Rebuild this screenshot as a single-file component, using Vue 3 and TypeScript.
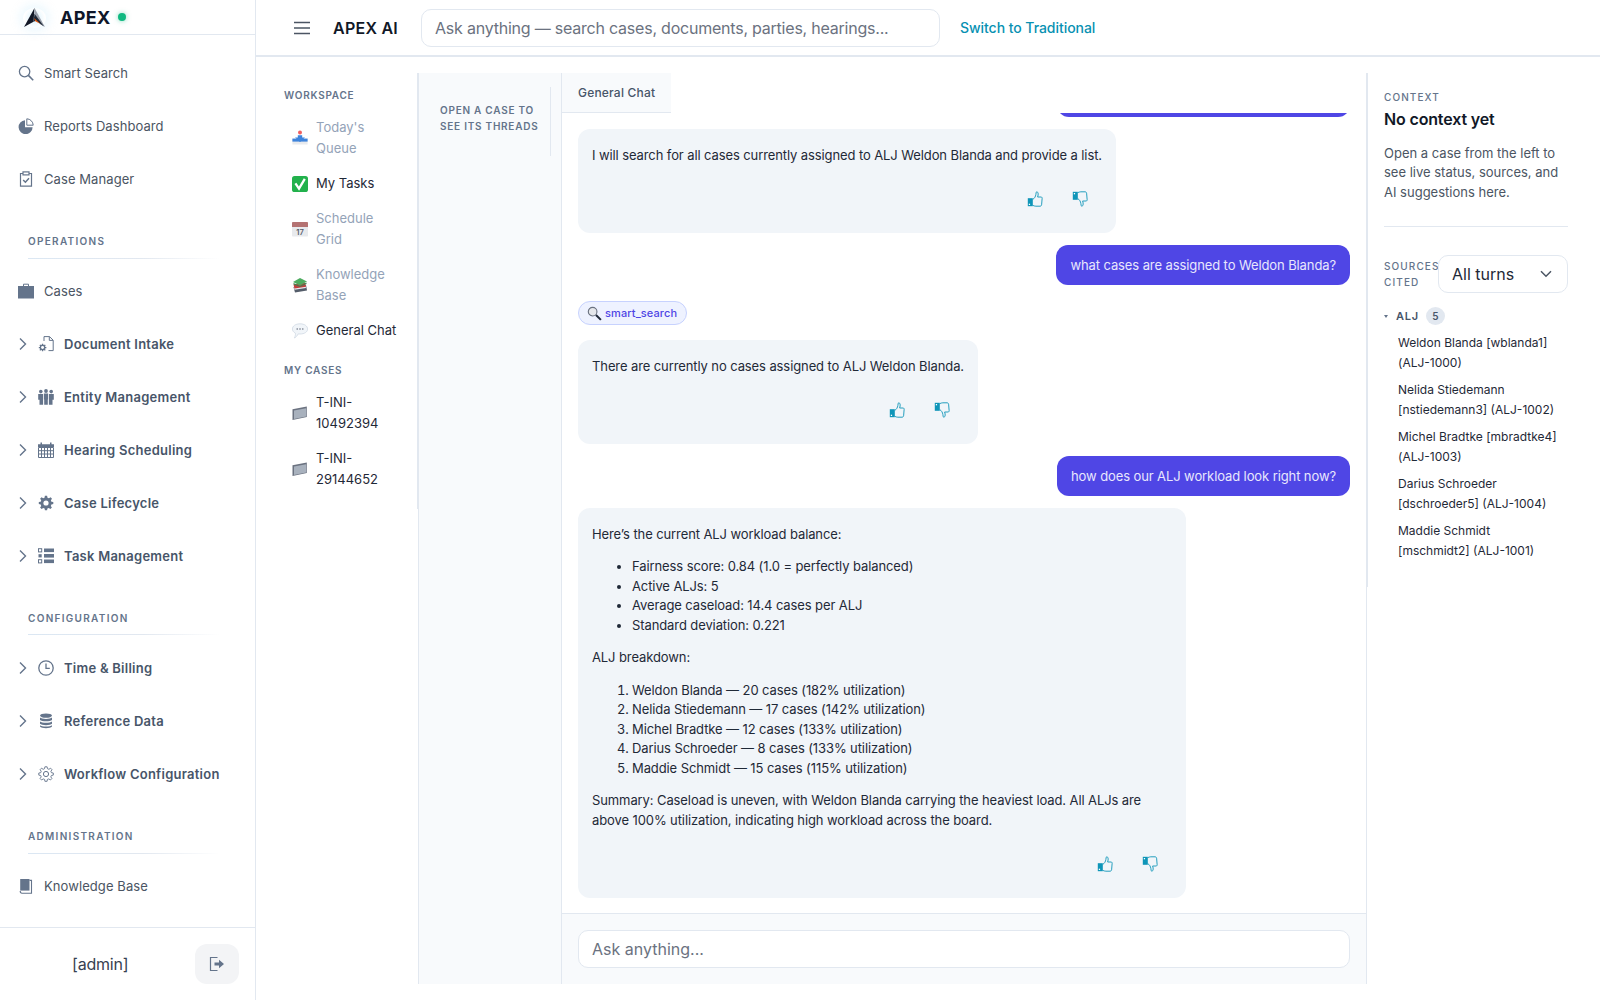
<template>
  <div class="app">
    <aside class="sidebar">
      <div class="brand">
        <span class="logo">
          <svg viewBox="0 0 24 21" width="23" height="20">
            <path d="M12 0 L1 20 L11 14.5 Z" fill="#111827" />
            <path d="M12 0 L23 20 L18 17 L12 7 Z" fill="#9ca3af" />
            <path d="M12 6 L22 19.5 L13.5 13.5 L11 14.5 Z" fill="#1f2937" />
            <path d="M11.5 10.5 L18 16.5 L12.8 14 Z" fill="#ea580c" />
          </svg>
        </span>
        <span class="brand-name">APEX</span>
        <span class="status-dot"></span>
      </div>

      <nav class="nav">
        <template v-for="(group, i) in navGroups" :key="i">
          <div v-if="group.title" :class="['nav-title', group.wide ? 'wide' : '']">{{ group.title }}</div>
          <div v-if="group.title" class="nav-rule"></div>
          <div
            v-for="item in group.items"
            :key="item.label"
            :class="['nav-item', item.expand ? 'expandable' : '']"
          >
            <svg v-if="item.expand" class="chev" viewBox="0 0 8 14" width="8" height="14">
              <path d="M1 1.5 L6.5 7 L1 12.5" fill="none" stroke="#64748b" stroke-width="1.4" />
            </svg>
            <svg class="nav-icon" viewBox="0 0 16 16" width="16" height="16" v-html="icons[item.icon]"></svg>
            <span>{{ item.label }}</span>
          </div>
        </template>
      </nav>

      <div class="side-foot">
        <span class="who">[admin]</span>
        <button class="logout" type="button">
          <svg viewBox="0 0 16 16" width="16" height="16">
            <path d="M8.5 1.5 H1.5 V14.5 H8.5" fill="none" stroke="#64748b" stroke-width="1.2" />
            <path d="M5.5 6.5 H10 V3.8 L15 8 L10 12.2 V9.5 H5.5 Z" fill="#64748b" />
          </svg>
        </button>
      </div>
    </aside>

    <main class="main">
      <header class="topbar">
        <svg class="burger" viewBox="0 0 16 14" width="16" height="14">
          <path d="M0 1.5 H16 M0 7 H16 M0 12.5 H16" stroke="#4b5563" stroke-width="1.7" />
        </svg>
        <span class="top-title">APEX AI</span>
        <input class="top-search" type="text" placeholder="Ask anything — search cases, documents, parties, hearings..." />
        <a class="top-link">Switch to Traditional</a>
      </header>

      <div class="panes">
        <section class="workspace">
          <div class="ws-title">WORKSPACE</div>
          <div v-for="w in workspaceItems" :key="w.label" :class="['ws-item', w.muted ? 'muted' : '']">
            <svg class="ws-icon" viewBox="0 0 16 16" width="16" height="16" v-html="emoji[w.icon]"></svg>
            <span>{{ w.label }}</span>
          </div>
          <div class="ws-title cases">MY CASES</div>
          <div v-for="c in myCases" :key="c" class="ws-item">
            <svg class="ws-icon" viewBox="0 0 16 16" width="16" height="16" v-html="emoji.folder"></svg>
            <span>{{ c }}</span>
          </div>
        </section>

        <section class="threads">
          <div class="thread-hint">OPEN A CASE TO SEE ITS THREADS</div>
        </section>

        <section class="chat">
          <div class="tabs">
            <div class="tab">General Chat</div>
          </div>

          <div class="messages">
            <!-- only the bottom edge of this one is still in view -->
            <div class="msg user scrolled-off"></div>

            <div class="msg bot">
              <p>I will search for all cases currently assigned to ALJ Weldon Blanda and provide a list.</p>
              <div class="feedback">
                <button type="button"><svg viewBox="0 0 16 16" width="16" height="16" v-html="thumb"></svg></button>
                <button type="button"><svg class="down" viewBox="0 0 16 16" width="16" height="16" v-html="thumb"></svg></button>
              </div>
            </div>

            <div class="msg user">what cases are assigned to Weldon Blanda?</div>

            <div class="tool-pill">
              <svg viewBox="0 0 16 16" width="15" height="15" v-html="emoji.magnifier"></svg>
              <span>smart_search</span>
            </div>

            <div class="msg bot">
              <p>There are currently no cases assigned to ALJ Weldon Blanda.</p>
              <div class="feedback">
                <button type="button"><svg viewBox="0 0 16 16" width="16" height="16" v-html="thumb"></svg></button>
                <button type="button"><svg class="down" viewBox="0 0 16 16" width="16" height="16" v-html="thumb"></svg></button>
              </div>
            </div>

            <div class="msg user">how does our ALJ workload look right now?</div>

            <div class="msg bot">
              <p>Here’s the current ALJ workload balance:</p>
              <ul>
                <li v-for="s in stats" :key="s">{{ s }}</li>
              </ul>
              <p>ALJ breakdown:</p>
              <ol>
                <li v-for="b in breakdown" :key="b">{{ b }}</li>
              </ol>
              <p>Summary: Caseload is uneven, with Weldon Blanda carrying the heaviest load. All ALJs are above 100% utilization, indicating high workload across the board.</p>
              <div class="feedback">
                <button type="button"><svg viewBox="0 0 16 16" width="16" height="16" v-html="thumb"></svg></button>
                <button type="button"><svg class="down" viewBox="0 0 16 16" width="16" height="16" v-html="thumb"></svg></button>
              </div>
            </div>
          </div>

          <div class="composer">
            <input type="text" placeholder="Ask anything..." />
          </div>
        </section>

        <section class="context">
          <div class="ctx-label">CONTEXT</div>
          <h2>No context yet</h2>
          <p class="ctx-text">Open a case from the left to see live status, sources, and AI suggestions here.</p>
          <div class="ctx-rule"></div>
          <div class="sources-head">
            <span class="sources-label">SOURCES CITED</span>
            <div class="turns">
              <span>All turns</span>
              <svg viewBox="0 0 12 8" width="12" height="8">
                <path d="M1 1.2 L6 6.2 L11 1.2" fill="none" stroke="#4b5563" stroke-width="1.5" />
              </svg>
            </div>
          </div>
          <div class="src-group">
            <span class="caret"></span>
            <span class="src-name">ALJ</span>
            <span class="src-count">5</span>
          </div>
          <div v-for="s in sources" :key="s" class="src-item">{{ s }}</div>
        </section>
      </div>
    </main>
  </div>
</template>

<script setup lang="ts">
interface NavItem {
  label: string;
  icon: string;
  expand?: boolean;
}

const navGroups: { title?: string; wide?: boolean; items: NavItem[] }[] = [
  {
    items: [
      { label: 'Smart Search', icon: 'search' },
      { label: 'Reports Dashboard', icon: 'pie' },
      { label: 'Case Manager', icon: 'clipboard' },
    ],
  },
  {
    title: 'OPERATIONS',
    wide: true,
    items: [
      { label: 'Cases', icon: 'briefcase' },
      { label: 'Document Intake', icon: 'docgear', expand: true },
      { label: 'Entity Management', icon: 'people', expand: true },
      { label: 'Hearing Scheduling', icon: 'calendar', expand: true },
      { label: 'Case Lifecycle', icon: 'gear', expand: true },
      { label: 'Task Management', icon: 'tasks', expand: true },
    ],
  },
  {
    title: 'CONFIGURATION',
    items: [
      { label: 'Time & Billing', icon: 'clock', expand: true },
      { label: 'Reference Data', icon: 'database', expand: true },
      { label: 'Workflow Configuration', icon: 'cog', expand: true },
    ],
  },
  {
    title: 'ADMINISTRATION',
    wide: true,
    items: [{ label: 'Knowledge Base', icon: 'book' }],
  },
];

const gearTeeth = 'M6.9 .8 H9.1 L9.5 2.7 L10.9 3.3 L12.6 2.2 L14 3.7 L12.9 5.3 L13.4 6.7 L15.3 7 V9.1 L13.4 9.5 L12.8 10.9 L13.9 12.5 L12.4 14 L10.8 12.9 L9.4 13.4 L9.1 15.3 H6.9 L6.6 13.4 L5.2 12.9 L3.6 14 L2.1 12.5 L3.2 10.9 L2.7 9.5 L.8 9.1 V7 L2.7 6.7 L3.2 5.3 L2.1 3.7 L3.5 2.2 L5.2 3.3 L6.5 2.7 Z';

const icons: Record<string, string> = {
  search: '<circle cx="6.6" cy="6.6" r="5.2" fill="none" stroke="#64748b" stroke-width="1.3"/><path d="M10.4 10.4 L15.2 15.2" stroke="#64748b" stroke-width="1.6"/>',
  pie: '<path d="M7 2.2 A7 7 0 1 0 14.6 9.2 H7 Z" fill="#64748b"/><path d="M8.8 .8 A6.6 6.6 0 0 1 15.2 7.2 H8.8 Z" fill="#fff" stroke="#64748b" stroke-width="1"/>',
  clipboard: '<path d="M5 2.5 H2.5 V15.2 H13.5 V2.5 H11" fill="none" stroke="#64748b" stroke-width="1.2"/><rect x="5" y=".9" width="6" height="3" fill="#fff" stroke="#64748b" stroke-width="1.2"/><path d="M5.2 9 L7.4 11.2 L11 7.2" fill="none" stroke="#64748b" stroke-width="1.5"/>',
  briefcase: '<path d="M5.5 3 V1.2 H10.5 V3" fill="none" stroke="#64748b" stroke-width="1"/><rect x="0" y="3" width="16" height="12.5" fill="#64748b"/>',
  docgear: `<path d="M6 5 V.6 H11.5 L15.2 4.2 V14.6 H10.5" fill="none" stroke="#64748b" stroke-width="1"/><path d="M11.3 .7 V4.4 H15" fill="none" stroke="#64748b" stroke-width="1"/><g transform="translate(.4 7.4) scale(.52)"><path d="${gearTeeth}" fill="#64748b"/><circle cx="8" cy="8" r="2.8" fill="#fff"/></g>`,
  people: '<circle cx="8" cy="2" r="1.9" fill="#64748b"/><circle cx="2.8" cy="2.6" r="1.8" fill="#64748b"/><circle cx="13.2" cy="2.6" r="1.8" fill="#64748b"/><path d="M5.9 4.6 H10.1 V10.5 H9.8 V15.8 H6.2 V10.5 H5.9 Z" fill="#64748b"/><path d="M.2 5 H5.1 V15.8 H1.5 V10.8 H.2 Z M10.9 5 H15.8 V10.8 H14.5 V15.8 H10.9 Z" fill="#64748b"/>',
  calendar: '<path d="M0 2.2 H2.5 V.4 H4 V2.2 H12 V.4 H13.5 V2.2 H16 V5 H0 Z" fill="#64748b"/><path d="M.5 5.5 H15.5 V15.5 H.5 Z" fill="none" stroke="#64748b" stroke-width="1"/><path d="M3.5 5.5 V15.5 M6.5 5.5 V15.5 M9.5 5.5 V15.5 M12.5 5.5 V15.5 M.5 8.7 H15.5 M.5 12 H15.5" stroke="#64748b" stroke-width="1"/>',
  gear: `<path d="${gearTeeth}" fill="#64748b"/><circle cx="8" cy="8" r="2.6" fill="#fff"/>`,
  tasks: '<rect x=".5" y=".7" width="3.2" height="3.2" fill="none" stroke="#64748b"/><rect x=".5" y="6.2" width="3.2" height="3.2" fill="#64748b"/><rect x=".5" y="11.7" width="3.2" height="3.2" fill="none" stroke="#64748b"/><rect x="6" y=".5" width="10" height="3.6" fill="#64748b"/><rect x="6" y="6" width="10" height="3.6" fill="#64748b"/><rect x="6" y="11.5" width="10" height="3.6" fill="#64748b"/>',
  clock: '<circle cx="8" cy="8" r="7.2" fill="none" stroke="#64748b" stroke-width="1.3"/><path d="M8 3.4 V8.4 H11.8" fill="none" stroke="#64748b" stroke-width="1.3"/>',
  database: '<ellipse cx="8" cy="2.6" rx="6" ry="2.2" fill="#64748b"/><path d="M2 4.6 C3.5 6.4 12.5 6.4 14 4.6 V7 C12.5 8.8 3.5 8.8 2 7 Z" fill="#64748b"/><path d="M2 8.4 C3.5 10.2 12.5 10.2 14 8.4 V10.8 C12.5 12.6 3.5 12.6 2 10.8 Z" fill="#64748b"/><path d="M2 12.2 C3.5 14 12.5 14 14 12.2 V13.6 C12.5 15.8 3.5 15.8 2 13.6 Z" fill="#64748b"/>',
  cog: `<path d="${gearTeeth}" fill="#fff" stroke="#64748b" stroke-width=".9"/><circle cx="8" cy="8" r="2.6" fill="none" stroke="#64748b" stroke-width="1"/>`,
  book: '<path d="M2.2 1 H11.5 V12.6 H2.2 Z" fill="#64748b"/><path d="M11.5 2.4 H13.5 V15.2 H4 C2.8 15.2 2.2 14.4 2.2 13" fill="none" stroke="#64748b" stroke-width="1.1"/>',
};

const emoji: Record<string, string> = {
  inbox: '<circle cx="8" cy="2.6" r="2" fill="#ef4444"/><path d="M.4 8.6 H4.5 L5.5 10.6 H10.5 L11.5 8.6 H15.6 V14.4 H.4 Z" fill="#e5e7eb"/><path d="M.4 8.6 H15.6 V11.6 H.4 Z" fill="#1d6fd6"/><path d="M5.8 5.2 H10.2 V7.5 H13 L8 12 L3 7.5 H5.8 Z" fill="#1d6fd6"/>',
  check: '<rect x="0" y="0" width="16" height="16" rx="2.6" fill="#22b14c"/><path d="M3.4 7.4 L7 12.6 L12.8 2.8" fill="none" stroke="#fff" stroke-width="2.3"/>',
  cal: '<rect x="0" y="1" width="16" height="14.5" rx=".8" fill="#e5e7eb"/><path d="M0 1.8 C0 1.3 .4 1 .8 1 H15.2 C15.6 1 16 1.3 16 1.8 V6 H0 Z" fill="#a85a5a"/><text x="8" y="13.6" text-anchor="middle" font-size="7.5" font-weight="600" fill="#374151" font-family="Inter, sans-serif">17</text>',
  books: '<path d="M1.5 10 L14 8 L15 13.5 L3 15.5 Z" fill="#374151"/><path d="M2 10.5 L13.5 8.8 L14 11 L2.5 12.8 Z" fill="#e5e7eb"/><path d="M1.5 7.5 L13 5.8 L14 9.8 L2.5 11.5 Z" fill="#b91c1c"/><path d="M1 5 L8 1 L15 4.5 L8 8.5 Z" fill="#2f9e44"/><path d="M1.5 6 L8 9 L14.5 5.5 V7 L8 10 L1.5 7.5 Z" fill="#1e6b32"/>',
  bubble: '<path d="M8 .8 C12.4 .8 15.6 3 15.6 6 C15.6 9 12.4 11 8 11 C7.4 11 6.8 11 6.2 10.9 C5.4 12.6 3.8 14.5 2.4 15 C3.2 13.6 3.6 11.8 3.4 10.2 C1.6 9.2 .4 7.8 .4 6 C.4 3 3.6 .8 8 .8 Z" fill="#f1f5f9" stroke="#cbd5e1" stroke-width=".7"/><circle cx="5.2" cy="6" r=".8" fill="#6b7280"/><circle cx="8" cy="6" r=".8" fill="#6b7280"/><circle cx="10.8" cy="6" r=".8" fill="#6b7280"/>',
  folder: '<path d="M.5 4.2 L14.8 1.6 V12 L.5 15 Z" fill="#6b7280"/><path d="M2 5.4 L14.2 3.2 V11.4 L2 14 Z" fill="#a8b1bd"/>',
  magnifier: '<circle cx="6" cy="6" r="4.6" fill="#e5e7eb" stroke="#6b7280" stroke-width="1.2"/><path d="M9.6 9.6 L14.8 14.8" stroke="#1f2937" stroke-width="2.2"/>',
};

const thumb = '<rect x=".8" y="7.2" width="5" height="8" fill="#0e95b8"/><rect x="1.8" y="12.7" width="1.3" height="1.3" fill="#fff"/><path d="M5.8 8.4 C7.4 7.4 8.6 5.6 8.9 3.4 L9.2 1.2 C9.8 .4 10.6 .9 11 1.9 C11.4 3.2 11 4.8 10.6 6 H14 C15 6 15.4 6.9 15.1 7.8 L14.6 13.8 C14.4 14.8 13.8 15.2 13 15.2 H8.8 C7.8 15.2 6.8 14.8 5.8 14.4" fill="none" stroke="#0e95b8" stroke-width=".9"/>';

const workspaceItems = [
  { label: "Today's Queue", icon: 'inbox', muted: true },
  { label: 'My Tasks', icon: 'check' },
  { label: 'Schedule Grid', icon: 'cal', muted: true },
  { label: 'Knowledge Base', icon: 'books', muted: true },
  { label: 'General Chat', icon: 'bubble' },
];

const myCases = ['T-INI-10492394', 'T-INI-29144652'];

const stats = [
  'Fairness score: 0.84 (1.0 = perfectly balanced)',
  'Active ALJs: 5',
  'Average caseload: 14.4 cases per ALJ',
  'Standard deviation: 0.221',
];

const breakdown = [
  'Weldon Blanda — 20 cases (182% utilization)',
  'Nelida Stiedemann — 17 cases (142% utilization)',
  'Michel Bradtke — 12 cases (133% utilization)',
  'Darius Schroeder — 8 cases (133% utilization)',
  'Maddie Schmidt — 15 cases (115% utilization)',
];

const sources = [
  'Weldon Blanda [wblanda1] (ALJ-1000)',
  'Nelida Stiedemann [nstiedemann3] (ALJ-1002)',
  'Michel Bradtke [mbradtke4] (ALJ-1003)',
  'Darius Schroeder [dschroeder5] (ALJ-1004)',
  'Maddie Schmidt [mschmidt2] (ALJ-1001)',
];
</script>

<style scoped>
.app {
  display: flex;
  height: 1000px;
  font-family: Inter, "Liberation Sans", sans-serif;
  font-size: 13px;
  color: #1f2937;
  background: #fff;
  overflow: hidden;
}

/* left navigation */
.sidebar {
  width: 256px;
  flex: none;
  display: flex;
  flex-direction: column;
  box-sizing: border-box;
  border-right: 1px solid #e2e8f0;
}

.brand {
  height: 35px;
  flex: none;
  box-sizing: border-box;
  display: flex;
  align-items: center;
  padding-left: 23px;
  border-bottom: 1px solid #e2e8f0;
}

.logo {
  width: 23px;
  height: 20px;
  margin-top: 1px;
  display: block;
  background: radial-gradient(circle, rgba(14, 165, 233, 0.16), rgba(14, 165, 233, 0) 70%);
  box-shadow: 0 0 8px 4px rgba(186, 230, 253, 0.25);
  border-radius: 50%;
}

.brand-name {
  margin-left: 14px;
  font-size: 18px;
  font-weight: 700;
  letter-spacing: 0.3px;
  color: #0f172a;
}

.status-dot {
  width: 8px;
  height: 8px;
  margin-left: 7px;
  border-radius: 50%;
  background: #10b981;
  box-shadow: 0 0 5px rgba(16, 185, 129, 0.5);
}

.nav {
  flex: 1;
  padding-top: 11px;
}

.nav-title {
  margin-top: 29px;
  padding-left: 28px;
  font-size: 10px;
  line-height: 13px;
  font-weight: 600;
  letter-spacing: 1.3px;
  color: #64748b;
}

.nav-title.wide {
  margin-top: 30px;
}

.nav-rule {
  height: 1px;
  margin: 9.5px 35px 6px 28px;
  background: linear-gradient(90deg, #dbe7f3, #e2e8f0 60%, rgba(226, 232, 240, 0));
}

.nav-item {
  height: 53px;
  display: flex;
  align-items: center;
  padding-left: 18px;
  color: #4b5563;
  font-weight: 400;
  letter-spacing: 0.08px;
}

.nav-item.expandable {
  font-weight: 600;
  color: #475569;
  letter-spacing: 0.25px;
}

.chev {
  flex: none;
  margin-left: 1px;
  margin-right: 11px;
}

.nav-icon {
  flex: none;
  margin-right: 10px;
}

.side-foot {
  height: 73px;
  flex: none;
  box-sizing: border-box;
  display: flex;
  align-items: center;
  justify-content: space-between;
  padding: 0 16px 0 72px;
  border-top: 1px solid #e2e8f0;
}

.who {
  font-size: 16px;
  letter-spacing: -0.2px;
  color: #374151;
}

.logout {
  width: 44px;
  height: 40px;
  border: 0;
  border-radius: 12px;
  background: #f3f4f6;
  display: flex;
  align-items: center;
  justify-content: center;
}

/* top bar */
.main {
  flex: 1;
  min-width: 0;
  display: flex;
  flex-direction: column;
}

.topbar {
  height: 57px;
  flex: none;
  box-sizing: border-box;
  display: flex;
  align-items: center;
  padding-left: 38px;
  border-bottom: 2px solid #e2e8f0;
}

.burger {
  flex: none;
}

.top-title {
  margin-left: 23px;
  font-size: 16px;
  font-weight: 600;
  letter-spacing: 0.25px;
  color: #111827;
}

.top-search {
  width: 519px;
  height: 38px;
  margin-left: 23px;
  box-sizing: border-box;
  padding: 0 13px;
  border: 1px solid #e2e8f0;
  border-radius: 10px;
  font-family: inherit;
  font-size: 16px;
  letter-spacing: -0.22px;
  outline: none;
}

.top-search::placeholder,
.composer input::placeholder {
  color: #6b7280;
  opacity: 1;
}

.top-link {
  margin-left: 20px;
  font-size: 14px;
  font-weight: 500;
  letter-spacing: -0.05px;
  color: #0891b2;
}

.panes {
  flex: 1;
  min-height: 0;
  margin: 16px 0;
  display: grid;
  grid-template-columns: 163px 143px 1fr 234px;
  grid-template-rows: minmax(0, 1fr);
  align-items: start;
}

/* workspace column */
.workspace {
  box-sizing: border-box;
  padding: 16px 12px 12px 28px;
  border-right: 2px solid #e2e8f0;
}

.ws-title {
  margin-bottom: 8px;
  font-size: 10px;
  line-height: 13px;
  font-weight: 600;
  letter-spacing: 0.75px;
  color: #64748b;
}

.ws-title.cases {
  margin-top: 16px;
  margin-bottom: 8px;
}

.ws-item {
  display: flex;
  align-items: center;
  gap: 8px;
  padding: 7px 8px;
  line-height: 21px;
  color: #1f2937;
}

.ws-item.muted {
  color: #94a3b8;
}

.ws-item.muted .ws-icon {
  opacity: 0.85;
}

.ws-icon {
  flex: none;
}

/* thread column */
.threads {
  height: 100%;
  box-sizing: border-box;
  padding: 14px 10px 0 0;
  background: #f8fafc;
  border-left: 1px solid #e2e8f0;
  border-right: 1px solid #e2e8f0;
  margin-left: -1px;
}

.thread-hint {
  box-sizing: border-box;
  padding: 15px 8px 22px 21px;
  border-right: 1px solid #e2e8f0;
  font-size: 10px;
  line-height: 16px;
  font-weight: 600;
  letter-spacing: 0.75px;
  color: #64748b;
}

/* chat column */
.chat {
  height: 100%;
  min-width: 0;
  margin-right: -1px;
  display: flex;
  flex-direction: column;
  border-right: 1px solid #e2e8f0;
}

.tabs {
  flex: none;
  display: flex;
}

.tab {
  height: 40px;
  box-sizing: border-box;
  padding: 0 16px;
  display: flex;
  align-items: center;
  background: #f8fafc;
  border-bottom: 1px solid #e2e8f0;
  font-size: 12px;
  font-weight: 500;
  letter-spacing: 0.2px;
  color: #475569;
}

.messages {
  flex: 1;
  min-height: 0;
  overflow: hidden;
  display: flex;
  flex-direction: column;
  justify-content: flex-end;
  gap: 12px;
  padding: 0 16px 15px;
}

.msg {
  flex: none;
  box-sizing: border-box;
  border-radius: 12px;
  letter-spacing: -0.1px;
}

.msg.user {
  align-self: flex-end;
  padding: 10px 14px;
  line-height: 20px;
  background: #4f46e5;
  color: #e8e7fd;
}

.msg.user.scrolled-off {
  width: 293px;
  height: 40px;
}

.msg.bot {
  align-self: flex-start;
  max-width: 608px;
  padding: 16.5px 14px 18px;
  line-height: 19.5px;
  background: #f1f5f9;
  color: #1f2937;
}

.msg p {
  margin: 0 0 13px;
}

.msg p:last-of-type {
  margin-bottom: 0;
}

.msg ul,
.msg ol {
  margin: 0 0 13px;
  padding-left: 40px;
}

.feedback {
  display: flex;
  justify-content: flex-end;
  gap: 13px;
  margin-top: 18px;
  padding-right: 6px;
}

.feedback button {
  width: 32px;
  height: 32px;
  padding: 0;
  border: 0;
  background: none;
  display: flex;
  align-items: center;
  justify-content: center;
}

.feedback .down {
  transform: scaleY(-1);
}

.tool-pill {
  flex: none;
  align-self: flex-start;
  height: 24px;
  margin: 4px 0 3px;
  box-sizing: border-box;
  padding: 0 9px 0 8px;
  display: flex;
  align-items: center;
  gap: 3px;
  border: 1px solid #c7d2fe;
  border-radius: 12px;
  background: #eef2ff;
  font-size: 11px;
  font-weight: 500;
  letter-spacing: 0.1px;
  color: #4f46e5;
}

.composer {
  flex: none;
  height: 71px;
  box-sizing: border-box;
  padding: 16px 16px 0;
  background: #f8fafc;
  border-top: 1px solid #e2e8f0;
}

.composer input {
  width: 100%;
  height: 38px;
  box-sizing: border-box;
  padding: 0 13px;
  border: 1px solid #e2e8f0;
  border-radius: 10px;
  font-family: inherit;
  font-size: 16px;
  outline: none;
}

/* context column */
.context {
  box-sizing: border-box;
  padding: 18px 32px 26px 16px;
  border-left: 2px solid #e2e8f0;
}

.ctx-label {
  font-size: 10px;
  line-height: 13px;
  font-weight: 500;
  letter-spacing: 1.1px;
  color: #64748b;
}

.context h2 {
  margin: 3px 0 0;
  font-size: 16px;
  line-height: 24px;
  font-weight: 600;
  letter-spacing: -0.15px;
  color: #111827;
}

.ctx-text {
  margin: 12.75px 0 0;
  line-height: 19.5px;
  color: #4b5563;
}

.ctx-rule {
  height: 1px;
  margin: 24px 0 28px;
  background: #e2e8f0;
}

.sources-head {
  display: flex;
  align-items: center;
  justify-content: space-between;
}

.sources-label {
  width: 54px;
  font-size: 10px;
  line-height: 16px;
  font-weight: 500;
  letter-spacing: 1.1px;
  color: #64748b;
}

.turns {
  width: 130px;
  height: 38px;
  box-sizing: border-box;
  padding: 0 15px 0 13px;
  display: flex;
  align-items: center;
  justify-content: space-between;
  border: 1px solid #e2e8f0;
  border-radius: 10px;
  font-size: 16px;
  color: #1f2937;
}

.src-group {
  height: 18px;
  margin: 14px 0 8px;
  display: flex;
  align-items: center;
  font-size: 11px;
  font-weight: 600;
  letter-spacing: 0.8px;
  color: #475569;
}

.caret {
  width: 0;
  height: 0;
  border-left: 2px solid transparent;
  border-right: 2px solid transparent;
  border-top: 3px solid #64748b;
  margin-right: 8px;
}

.src-count {
  width: 19px;
  height: 18px;
  margin-left: 7px;
  border-radius: 50%;
  background: #e2e8f0;
  display: flex;
  align-items: center;
  justify-content: center;
  font-size: 10px;
  letter-spacing: 0;
}

.src-item {
  margin: 0 8px 7px 14px;
  font-size: 12px;
  line-height: 20px;
  color: #1f2937;
}

.src-item:last-child {
  margin-bottom: 0;
}
</style>

<style>
html,
body {
  margin: 0;
  background: #fff;
}
</style>
